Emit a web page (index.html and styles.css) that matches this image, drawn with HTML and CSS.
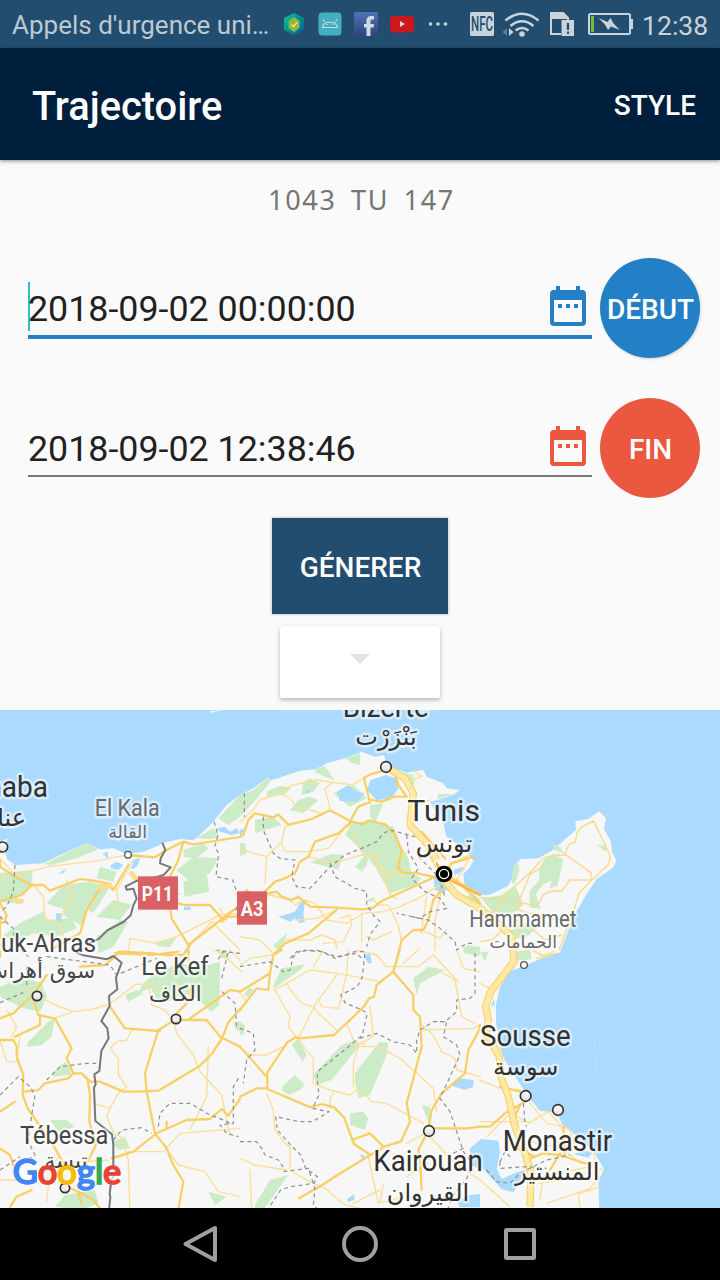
FILE: index.html
```html
<!DOCTYPE html>
<html lang="fr">
<head>
<meta charset="utf-8">
<title>Trajectoire</title>
<link rel="stylesheet" href="styles.css">
</head>
<body>
<div class="screen">
  <header class="status">
    <span class="carrier">Appels d'urgence uni…</span>
    <svg class="status-icons" viewBox="280 0 360 48" width="360" height="48">
      <defs>
        <linearGradient id="hex" x1="0" y1="0" x2="1" y2="1"><stop offset="0" stop-color="#16c48d"/><stop offset=".5" stop-color="#088e8d"/><stop offset="1" stop-color="#075a94"/></linearGradient>
        <linearGradient id="fb" x1="0" y1="0" x2="0" y2="1"><stop offset="0" stop-color="#5272b5"/><stop offset="1" stop-color="#2d4681"/></linearGradient>
      </defs>
      <path fill="url(#hex)" d="M294 13l10 5v12l-10 5-10-5V18z"/>
      <path fill="#9fb52d" stroke="#5dcc76" d="M294 17.500l5 3.500v7l-5 3.500-5-3.500v-7z"/>
      <path fill="none" stroke="#dce9bd" stroke-width="1.300" d="M291.500 24.500l2 2 3.500-4"/>
      <rect x="318.500" y="12.500" width="23" height="23" rx="4" fill="#43aebf"/>
      <path fill="none" stroke="#c5dde5" stroke-width="1.100" d="M322.500 27.500c1-7 14-7 15 0zM324.500 22l-1.500-2.500M335.500 22l1.500-2.500"/>
      <circle cx="327" cy="24.500" r=".8" fill="#c5dde5"/><circle cx="333" cy="24.500" r=".8" fill="#c5dde5"/>
      <rect x="354" y="12" width="24" height="23.500" rx="2" fill="url(#fb)"/>
      <path fill="#d0dae3" d="M366.500 36v-8.500H364V24h2.500v-3c0-3.500 2-5 5-5h2.500v3.500h-2c-1.300 0-1.500.700-1.500 1.800V24h3.500l-.5 3.500h-3V36z"/>
      <rect x="390" y="16" width="24" height="16.500" rx="4" fill="#cc171e"/>
      <path fill="#d5dce2" d="M400 21l5 3-5 3z"/>
      <g fill="#c8d3dc"><circle cx="430.500" cy="24" r="1.800"/><circle cx="438" cy="24" r="1.800"/><circle cx="445.500" cy="24" r="1.800"/>
        <rect x="470" y="12" width="24" height="24" rx="1.500"/></g>
      <text class="nfc" x="471" y="31" textLength="22" lengthAdjust="spacingAndGlyphs">NFC</text>
      <g fill="none" stroke="#c8d3dc" stroke-width="2.600">
        <path d="M505.500 20.500q16.500-13.500 33 0M510.500 26q11.500-9.500 23 0M515.500 30.500q6.500-5 13 0"/>
      </g>
      <circle cx="522" cy="34" r="2.800" fill="#c8d3dc"/>
      <path fill="#5a7d95" d="M507 28v8l-4.500-4z"/><path fill="#c8d3dc" d="M509 28l4.500 4-4.500 4z"/>
      <path fill="none" stroke="#c8d3dc" stroke-width="2" d="M561 34h-10V13h12l5 5v3"/>
      <path fill="#c8d3dc" d="M550 12h13l5 5v2h-18zM561.500 20H574v16h-12.500z"/>
      <path stroke="#234d6e" stroke-width="2.200" d="M568 23v7M568 31.500v2.300"/>
      <rect x="589" y="14" width="41" height="20" rx="1.500" fill="none" stroke="#c8d3dc" stroke-width="2"/>
      <path fill="#c8d3dc" d="M631 19h2v10h-2zM598.500 18l9 4 3-4 3 5.500 6.500 6.500-9-3.500-3 3.500-3-5.500z"/>
      <rect x="591" y="16" width="3" height="16" fill="#73bd37"/>
    </svg>
    <span class="clock">12:38</span>
  </header>

  <nav class="appbar">
    <h1 class="title">Trajectoire</h1>
    <span class="action">STYLE</span>
  </nav>

  <main class="content">
    <p class="plate"><span>1043</span><span>TU</span><span>147</span></p>
    <div class="row">
      <div class="field focused">
        <span class="value">2018-09-02 00:00:00</span>
        <svg class="calendar" viewBox="0 0 36 40" width="36" height="40"><path fill="currentColor" fill-rule="evenodd" d="M4 4h2V0h4v4h16V0h4v4h2a4 4 0 0 1 4 4v28a4 4 0 0 1-4 4H4a4 4 0 0 1-4-4V8a4 4 0 0 1 4-4zM4 14v22h28V14zM8 18h4v4H8zM16 18h4v4h-4zM24 18h4v4h-4z"/></svg>
      </div>
      <button class="round start">DÉBUT</button>
    </div>
    <div class="row">
      <div class="field end-field">
        <span class="value">2018-09-02 12:38:46</span>
        <svg class="calendar" viewBox="0 0 36 40" width="36" height="40"><path fill="currentColor" fill-rule="evenodd" d="M4 4h2V0h4v4h16V0h4v4h2a4 4 0 0 1 4 4v28a4 4 0 0 1-4 4H4a4 4 0 0 1-4-4V8a4 4 0 0 1 4-4zM4 14v22h28V14zM8 18h4v4H8zM16 18h4v4h-4zM24 18h4v4h-4z"/></svg>
      </div>
      <button class="round end">FIN</button>
    </div>
    <button class="generate">GÉNERER</button>
    <div class="dropdown"><svg viewBox="0 0 20 10" width="20" height="10"><path fill="#e4e4e3" d="M0 0h20L10 10z"/></svg></div>
  </main>

  <svg class="map" viewBox="0 30 2160 1494" width="720" height="498">
    <defs>
      <linearGradient id="dot" x1="0" y1="0" x2="0" y2="1"><stop offset="0" stop-color="#fff"/><stop offset="1" stop-color="#ddd"/></linearGradient>
    </defs>
    <rect y="30" width="2160" height="1494" fill="#abdaff"/>
    <path class="land" d="M0 425l25-10-15 25 12 38 23 17 85-5 50-25 80-35 40 18 40-3 40 17 50-7 45-18 15-9 50-11 40 3 20-15 40-40 40-50 40-30 40-20 45-33 5 10 90-30 50-4 30-18 55-15 50-20 40 15 27-5 6 20 22 20 40 13 50-8 10 20 50 20 10 15 40 5-20 15-50 15-20 5 20 35 20 30 10 40 30 22 30 20 20 30-10 20-20 20 5 40 25 20 20 3 30-1 55-27 13-25 2-30 22-25 53-2 40-23 73-62-2-26 39-7 32-23 21 20-6 33 20 35 4 35 14 25-12 22-48 33-30 45-35 60-20 50-25 65-60 20-45 20-45 17-30 48-12 50v60l12 70 15 40 45 70 30 45 30 35 35 5 20 5 10 30 45 35 50 45 32 55-17 35 3 95H0zM630 34l30-4h5l-33 9z"/>

    <!-- forests -->
    <g class="green">
      <path d="M130 493l130-63 35 18-60 25-80 22zM0 520l98-10-3 40-55 60-40-5zM300 500l50 15-10 30-50-10zM190 555l80-10 60 15-50 80-30-20-35 15-75-25zM205 575l55 55-10 50-60-35zM60 670l70-35 15 25 70-5 15 30-60 25-70-10-50 25-40-20zM340 600l55 15-35 45-70-10zM290 710l70-50 25 5-45 75-45 20zM550 450l60-20 15 15-35 30-40-5zM530 510l50-40 75 5-25 45-60 25zM550 545l70-25 8 55-75 15zM655 355l65-70v65l-35 25zM590 415l50-30 20 25-30 8zM470 725l60-13-20 30-40-5z"/>
      <g transform="translate(720)">
        <path d="M0 285l40-15 45-38 5 15-40 50-50 53zM80 275l40-18 35 8-25 20-50 5zM230 200l25 0 30 42-60-25zM315 175l45-15v35l-25-7zM190 245l20-10 30 15-20 25-35 10zM150 330l25-30 35-10 25 10-45 40zM45 360l55-10 25 25-80 25zM280 280l60-25 40 40-50 25zM335 370l60-10 65 20 20 50 25 45 10 45 30 15-20 20-75 25-45-80-50-60-40-35zM345 500l45-50-10 45-15 20zM210 487l65-25 35 2-15 45-40-10zM475 215l45 10 5 30-25-10zM595 282l50 0-55 15zM100 735l40-35-5 25-25 25zM390 315l40-5-25 60-15-20zM380 600l20-10 5 10-15 5zM0 430l15 0 5 30-20 8z"/>
        <path d="M680 590l20-10 20 20v20l-35-15zM670 740l50 0v25l-50-5z"/>
      </g>
      <g transform="translate(1440)">
        <path d="M220 432l15 5 22 25-35-12zM348 432l32 8-2 15zM195 475l25-12 30 15-18 80-25 8 10-25-25 10-25 30 15 45-33-3v-50l30-35-3-28zM100 495l15-5 3 20-15 45-8-10zM5 595l60-10 40-30 25 60-30 25-60 0zM90 690l50-20 30 15-35 30-30 0zM110 755l40-7 5 30-50 5zM0 755l25 0-10 30z"/>
      </g>
      <g transform="translate(0 750)">
        <path d="M0 110l70-30 55 20 15 40-20 45-50-10-70-35zM85 275l60-60 20-10-10 55-30 25-45 5zM160 365l35-30 20 20-5 20-50 5zM375 135l35-15 20 10-45 25zM430 100l40-35 70-25 50 15 70-20-2 130-25 20-60-60-40 25-60 5-20-40-40 15zM150 510l50 0 25 20-50 15zM110 665l60-15 40 30-50 25zM165 770l30-35 90-15 10 40-50 20zM335 575l40-15 15 35-35 5zM625 725l55 15-35 25zM660 0l25 10v20l-25-10zM700 215l20 0v30l-15-10z"/>
      </g>
      <g transform="translate(720 750)">
        <path d="M100 105l25-50 70-12-15 18-80 55zM10 135l20-25 10 10-15 20zM155 285l20-20 25 50-12 20zM130 405l35-30 30 30-15 15-35 15-20-15zM220 375l85-90 45-15 10 15-85 105-45 15zM345 370l50-65 25-30 25 5-5 35-50 120-35 10-10-50zM520 85l45-35 50 10-75 40-10 35zM330 490l40-5 15 20-10 35-45-15zM545 465l25 5-2 55zM45 765l45-75 55-15-75 105-25 0zM0 215l15 10-5 30-10 0zM680-15l30 5 5 30-35-10z"/>
      </g>
    </g>

    <!-- lakes -->
    <g class="lake">
      <path d="M308 460l15-5 3 25zM332 495l18-10 20 10-15 15-22-5zM393 505l10-25 18-8-8 25-15 10zM175 522l25-18-10 15zM168 640l20 0-5 25-15-5zM552 620l20 0v10h-20zM650 385l25-5 15 15 20-10 10 15-25 5-35-10z"/>
      <path d="M720 390l12-5-6 18-6 5zM1010 275l35-20 25 20 25 5-25 25-50-2zM1112 240l45-15 30 10 8 30-20 30-45 5-30-30zM835 650l50-15 20-35 10 5-5 40 5 20-15 5-15-15-15 10zM915 275l20-8-13 15zM1300 535l30-10 20 30-20 25-25-10zM1360 510l30-10 5 10-30 15z"/>
      <path d="M1090 765l20-3 6 25-10 5zM1480 895l5 20-10 5zM1350 1155l30-20 40 5v20l-25 10zM1410 1345l30-25v90l-30-20zM1440 1317l55 5 5 35-10 50 15 30 45-20 20-5-10 35-20 30-35-10-60-65-5-25zM1370 1505l40-20 30-3v40h-60zM1043 1495l20-12v18l-20 5zM1080 1362l15 5-8 10zM1720 1362l30-10 30 3-15 18z"/>
    </g>

    <!-- secondary roads -->
    <g class="minor">
      <path d="M5 480l40 45 100-25 150-18 75-15M95 550l35 40 5 65 45 15 10 35-10 40M0 520l30 30M320 545l30 25 5 45-15 20M180 655l35-70-15-45M350 570l50-90M385 755l5-40 80 15 60-20 130-65M435 552l30 20 75 10M660 645l60-5M565 740l70-75 60 60 25 25M670 645l-10-20"/>
      <g transform="translate(720)">
        <path d="M0 365l35-30 25-35 60-20 5-10 35-15 70-15 105 15 35-20M120 280l30 15 20 25 40 10 40 12M270 325l-15-60 20-15M165 370l-30 10-10 45-45 45-55-15-25-10M80 470l-5 80M125 430l10 25 70 0 60-10 60-75 30 70 20 30 65-10M210 470l65 20 90-25 30 5 30 25 15 30 55-20M500 530l-75-10-30-55M430 525l20 60 20 10M500 460l-35 20M60 600l30-15 60 15 15 15 30-15 30 10 35 50 60 10 50-30 60-5 50-15 65-30 95-60M290 630l-60 25-65 5M365 640l0 85M300 655l30-10 5 30-25 50-60 5M0 710l60 10 40 40M140 720l70 0 35-15 40 15 5 25M380 710l20 10 55-25M395 595l20 20 30 0 30 60 10 50M560 590l-10 60-5 50M605 570l-20 90 0 90M620 690l-20 25-45-20M480 225l20 20 45-15-20-15M570 300l-45 20M580 345l30 10M560 455l30 50M630 490l60-25M645 550l40-70"/>
      </g>
      <g transform="translate(1440)">
        <path class="mid" d="M0 593l60 5 55 10 50 7 12-5 13-27 25-10 30 0 25-33h65l-2-22-75-53-35 0-35 10-30 35-55 50-38 37M115 610v20l35 10 130 30M256 462l10-28 20-8 5-28 15-18 35-17 50 105-5 25-53 50-35 35-20 65-40 105M115 608l35-85 40-25M60 600v30l-60 15M160 690l35 30 50-15M90 650l25 15 5 40 20 55M0 725l35-5 40-35M160 750l30 20 30-15M170 775l60-15"/>
      </g>
      <g transform="translate(0 750)">
        <path d="M75 115l90 50 55 20 60-8 50-15 80-60 45 5 45 20M160 205l60-20M280 460l50 15M395 240l-15 30-30 5-20 20 25 30v50l25 35-25 20-25 45-10 25 10 25 15 30 20 5 20 70 5 160 10 5M445 95l10 70 40 15 25 30 10 40 50 65 20 50 65 70 15 80 10 40M625 290l-5 150-50 100M495 600l45-50 180-15M385 605l110 0M510 610l25 35 80 20 40 60 65 15M0 270l20 65h30l10-80M20 180l30 50-15 30M0 690l140 0M120 675l60-55M180 640l145-10M150 665l-10 90M640 0l25 10 60 55M690 0l30 30"/>
      </g>
      <g transform="translate(720 750)">
        <path d="M0 45l30-20 65-10M0 130l20 25M100 120l40-20 70-40 80 10 135 25M250 0l-30 50M325 0l-5 70-20 90-5 15-50-5-10-25-60 120M140 100l20 30 25 30 35 10 15 20 55 50M105 120l45 80-5 30 20 25 30 40 25 30v75l50 20 60 15 20-15 20 5 25 30 45 5 110 60M320 220l20 50 15 20 60 0 65 35 100 90 10 70M290 75l-50 70M355 290l-15 50 0 70M390 170l10 90-55 30M270 475v-30l10-15M375 290l-10-15M20 315h60l60-30M650 0l20 55 50 10M585 55l60 35 20 110 40 20M540 220l40 35 25 50 40 20 5 35 70 20M550 240l150-5 20-10M350 0l60 15 30 35h95l45-35 75 80M490 40l50-45M80 430l20 50 5 60 30 40 15 10v70l40 25 65 30 60 50 45 10M0 625l45 20 95 15M30 660l5 120M385 620l30 140 80-20M420 755l10-50M340 760l80-40M570 560l75 80 75 50M500 580l65-35M500 680l65-40"/>
      </g>
      <g transform="translate(1440 750)">
        <path d="M0 100l30 15M0 390l60 25 60 5M0 515h155l50-30 45 50M150 460l50 60 50 10 20 10M150 575l100 20 50 45M20 560l70-70 60 30M200 560l60 30M270 545l20 60M180 750l10-70 140-30 40 10M0 690l90 80M175 700l75-10 80-20M300 730l60-20M200 760l60-20 70-25 30-35M295 730l5 40M160 5l50 15M340 605l15 80"/>
      </g>
    </g>

    <!-- main roads -->
    <g class="major">
      <path d="M0 480v20l45 30 50 25 35 0 20 17 90-35 40 5 40 8 20 20 45-75M385 465l80 7 40-25 45-22 30 8 140-22M550 425l-15 55-25 50M300 565l-40 65-20 70-80 45M535 610l20 5h75l40 45M510 530l-5 60 10 65 50 80 155-120M0 605l65-20 30-30M0 610l20 35-5 20-15 5M0 650v120M565 740v40M720 650h-35l-20 15M570 735l-20 30-60 0-30-5-100-5-15 5"/>
      <g transform="translate(720)">
        <path d="M0 410l10-5 15-45 20-20 55 12 15-8 30 30 65-15 60-28 60 32 40 10 15-12 50 12 30 30 20 50-12 50 15 15 45 2 90 20M330 365l25-45 25-10 10-2-15-60-3-15 20-10 45-13M335 365l-40 35-70 25-20 45-25 15-15 35-30 15-30 10-30 30M0 590l20-20 20 20 70-15 15 15 30 10 20-10 35 30 80 3 80 5 30-5 25-20 45-20 100-45 30-20M460 205l15 50 25 35h-35l-40 15-30-5M545 395l70 80M590 450l-30-20M290 630l-85 70-70 30-30 30M470 780l15-60 35-30h30l15-30 15-60 25-30M620 510l15-20 65-20M610 530l15 40M650 540l70 70M610 520l110 65"/>
        <path class="orange" d="M610 530l-20-40 20 40 110 55"/>
      </g>
      <g transform="translate(0 750)">
        <path d="M0 205l40-15 25-25 30-25 25-35 20-30M100 150l15 45 45 10M45 260l75-35 0-30M0 270h40l10 20 0 30 20 55-2 60 15 40 70 100 35 60-5 30M45 455l-45 30M75 425l40-5 20-20 70-15 15-15 25 0 25 25 30 0 70 30h50l55-3 50-30 75-45 35-35 30-45 20-50 40-45M165 205l50 90-15 30 20 45M262 385l8 50-2 80 20 70-30 60M330 170l45 65 105 8M525 210l-50 30-40 130 5 55 25 125 35 45 20 50 30 50-20 110M530 210h90l40 50 60 30M570 205l100-70 20-15 30 5M530 190l40-40 0-30M240 50l75-5 40-35M355 10l100 5 80-10M335 625l65-20 70-55 90-40 70-3 35-30 20 20 35-50M500 535v-20M0 595l30 20 10 30M200 710l45 20 35 20 20 25M30 770l20-30 45-20M235 730l10 30"/>
      </g>
      <g transform="translate(720 750)">
        <path d="M125 0l-25 15-10 55-90 55M90 70l-5 50-35-5-50 65M480-5l-20 70 60 70v45l20 20 5 90-25 95-20 75 10 55-28 60-50 15-50 30-105 65-30 20-70 40M460 65l-50 40-8 35-15 5-15 25-90 85-100 10-15-3-25 15-60 90v50l130 55 35-10 35 10 30 30 30 80 45 30M0 290l80 90M0 440l50-25 30 0M335 570l55-20 40 40M720 225l-5 20-30 55-10 70-70 60-30 50-10 60M570 535h110l40-5M565 540l-30 60 5 20 5 100"/>
      </g>
      <g transform="translate(1440 750)"><path d="M0 530h30l45-40 60-35M95 520l25-55M60 410l60 15 20 25M140 630l50-20 50 5 90 30M240 610l-30 50M250 530l5 90M100 590l65 30"/></g>
    </g>
    <path class="mergelink" d="M300 562l30-7M395 520l12 16M50 604h14"/>

    <!-- motorways -->
    <path class="motor-edge" d="M1165 205l50 30 25 45-10 95 55 60 25 45M1320 525l50 60 70 40 65 55 30 30 7 75-70 90-15 45 8 40-7 40 40 70 5 60 22 60 20 90 30 80 18 60-3 100"/>
    <path class="motor" d="M1165 205l50 30 25 45-10 95 55 60 25 45M1320 525l50 60 70 40 65 55 30 30 7 75-70 90-15 45 8 40-7 40 40 70 5 60 22 60 20 90 30 80 18 60-3 100"/>

    <!-- administrative boundaries -->
    <g class="dashed">
      <path d="M642 365l12 40-10 35 12 20-8 70 50 10 20 60-10 30 12 50M45 495l-5 80-20 45-20 15M0 650l45 40-10 30 50 50M720 760l-50-5-20 30"/>
      <path d="M733 280v70M790 350l0 40 30 70 20 15 45 5-10 50 15 30 40 5 60-65 45-35 50-20 45-20 20-25 20-10 75 20M990 490l15 40 60 35 35 10v40l20 30 20 20-30 40-10 35M1220 405l5 50 30 50-20 30 40 40 45 20 20 30-50 10-30 20-70-15M1255 470l60 60 20 60M1235 650l50 10 35 25 45 40 5 25 30-20 20 0M870 775l20-20 60-5 60 20 60-10 15 15"/>
      <path d="M0 908l70-30M140 770l190 25 20 30 60-25 60-25M665 835l20-80-35-5M665 875l40 35 5 70M140 1140l40-40 80-10 30 0M0 1185l55-55 35 30 15 25-10 60-10 80 20 40-30 20M0 1410l60-40M340 1320l25-30 60-7 30 17M475 1280l5-40 30-30 60 0 50 30 50 20 20 10M715 1135l-15 25 0 110-40 5 20 25 35 10M80 855l0-60"/>
      <g transform="translate(720 750)"><path d="M0 50l90-15 40 30 20-5 10-40 25-20 60 5 40 20 60-20 30 0-8 75-15 30-50 25 15 25 50 20 15 10-15 65-35 30-100 80 0 30 5 40-20 40 50 10-50 30-40 0-70-15 5 40 40 45 30 30 15 40 35 25-10 20-70 10-30 10-60 90M0 235l40 15 5 50-25 30-10 70M360 265l50-15 50 25 50 10 20 25 0-40 10-30 40-25h40l-10 45 40 25 10 30-60 130 30 40 40 120 30 40-20 40-40 50-20 50M580 215h35l35-30 0-35 40-5 15-15V0M0 575h50l15 20 10 20 40 15 20 30M130 665l75-10 20 60-5 50 20 20M640 610l40-20"/></g>
      <path d="M1570 1210l5 60 5 10M1500 1385l15-30 20 20M1500 1385l0 20 80-5 60 5M1460 1410l30 35 40 5 30-30 80-40 70-15"/>
    </g>

    <!-- national border -->
    <path class="border" d="M488 430l8 20-14 25-2 15 32 12-20 22-25 8-55 10-35 17 3 10 20-3 10 30-10 20-8 30-22 20-48 25-25 25-30 15M230 758l20 8 70 12 20-10 25 20-17 45 4 35-25 20 2 30-25 45 18 22 4 30-22 38-6 60-15 10 4 30-5 10 4 100 50 40 4 30v70l6 14-12 24-5 40 2 10-6 60"/>

    <!-- town markers -->
    <g class="town"><circle cx="8" cy="441" r="15"/><circle cx="1158" cy="201" r="16"/><circle cx="111" cy="888" r="14"/><circle cx="528" cy="957" r="14"/><circle cx="195" cy="1464" r="14"/><circle cx="1287" cy="1293" r="16"/><circle cx="1577" cy="1188" r="16"/><circle cx="1674" cy="1230" r="16"/></g>
    <g class="small-town"><circle cx="384" cy="464" r="10"/><circle cx="1572" cy="795" r="10"/></g>
    <circle cx="1332" cy="522" r="25"/><circle cx="1332" cy="522" r="14" fill="none" stroke="#fff" stroke-width="4"/>

    <rect x="414" y="529" width="120" height="100" fill="#d96163"/><rect x="711" y="574" width="90" height="100" fill="#d96163"/>
    <text class="shield" x="425" y="603" textLength="94" lengthAdjust="spacingAndGlyphs">P11</text><text class="shield" x="722" y="648" textLength="68" lengthAdjust="spacingAndGlyphs">A3</text>

    <!-- place names -->
    <g class="city">
      <text x="1028" y="51" textLength="258" lengthAdjust="spacingAndGlyphs">Bizerte</text><text class="ar" x="1158" y="136">بَنْزَرْت</text>
      <text x="-142" y="291" textLength="286" lengthAdjust="spacingAndGlyphs">Annaba</text><text class="ar from-right" x="78" y="378">عنابة</text>
      <text x="1222" y="363" textLength="218" lengthAdjust="spacingAndGlyphs">Tunis</text><text class="ar" x="1332" y="456">تونس</text>
      <text x="1440" y="1038" textLength="272" lengthAdjust="spacingAndGlyphs">Sousse</text><text class="ar" x="1577" y="1126">سوسة</text>
      <text x="1508" y="1352" textLength="328" lengthAdjust="spacingAndGlyphs">Monastir</text><text class="ar" x="1672" y="1439">المنستير</text>
      <text x="1120" y="1414" textLength="328" lengthAdjust="spacingAndGlyphs">Kairouan</text><text class="ar" x="1284" y="1503">القيروان</text>
    </g>
    <g class="city mid-city">
      <text x="-82" y="755" textLength="370" lengthAdjust="spacingAndGlyphs">Souk-Ahras</text><text class="ar" x="116" y="834">سوق أهراس</text>
      <text x="424" y="825" textLength="202" lengthAdjust="spacingAndGlyphs">Le Kef</text><text class="ar" x="526" y="902">الكاف</text>
      <text x="60" y="1331" textLength="265" lengthAdjust="spacingAndGlyphs">Tébessa</text><text class="ar" x="198" y="1405">تبسة</text>
    </g>
    <g class="city small-city">
      <text x="284" y="348" textLength="195" lengthAdjust="spacingAndGlyphs">El Kala</text><text class="ar" x="383" y="415">القالة</text>
      <text x="1408" y="681" textLength="321" lengthAdjust="spacingAndGlyphs">Hammamet</text><text class="ar" x="1570" y="745">الحمامات</text>
    </g>
    <path d="M1783 1020q3 80 12 135" fill="none" stroke="#cae7ff" stroke-width="3" stroke-dasharray="4 5"/>
    <g class="google-halo"><circle cx="84" cy="1415" r="42"/><circle cx="152" cy="1428" r="29"/><circle cx="210" cy="1428" r="29"/><circle cx="266" cy="1428" r="29"/><circle cx="338" cy="1428" r="27"/></g>
    <text class="google" x="38" y="1451" textLength="326" lengthAdjust="spacingAndGlyphs"><tspan class="g-blue">G</tspan><tspan class="g-red">o</tspan><tspan class="g-yellow">o</tspan><tspan class="g-blue">g</tspan><tspan class="g-green">l</tspan><tspan class="g-red">e</tspan></text>
  </svg>

  <footer class="navbar">
    <svg viewBox="0 0 36 40" width="36" height="40"><path d="M33 4v32L3.500 20z"/></svg>
    <svg viewBox="0 0 36 40" width="36" height="40"><circle cx="18" cy="20" r="16"/></svg>
    <svg viewBox="0 0 36 40" width="36" height="40"><rect x="4" y="6" width="28" height="28" rx=".5"/></svg>
  </footer>
</div>
</body>
</html>
```
FILE: styles.css
```css
* { box-sizing: border-box; }
body { margin: 0; font-family: Roboto, "Noto Sans", sans-serif; }
button { border: 0; padding: 0; font: 500 28px/1 Roboto, sans-serif; color: #fff; }
.screen { width: 720px; height: 1280px; display: flex; flex-direction: column; overflow: hidden; background: #fafafa; }
.status { height: 48px; flex: none; display: flex; align-items: center; padding-left: 12px; background: #234d6e; color: #bcc9d3; font-size: 27px; white-space: nowrap; }
.carrier { width: 268px; padding-top: 2px; font-size: 26px; }
.status-icons { flex: none; }
.clock { margin-left: 2px; padding-top: 2px; font-size: 26.6px; color: #c8d3dc; }
.nfc { font: 500 20px Roboto, sans-serif; fill: #234d6e; }
.appbar { height: 112px; flex: none; display: flex; align-items: center; justify-content: space-between; padding: 2px 24px 0 32px; background: #001f3d; color: #fff; box-shadow: 0 1px 4px rgba(0,0,0,.45); z-index: 1; }
.title { margin: 0; padding-top: 4px; font-size: 39.8px; font-weight: 500; line-height: 48px; }
.action { font-size: 28px; font-weight: 500; }
.content { height: 550px; flex: none; display: flex; flex-direction: column; align-items: center; padding-top: 20px; }
.plate { margin: 0; height: 58px; flex: none; width: 187px; margin-left: 3px; display: flex; justify-content: space-between; font: 27px/40px "Noto Sans", sans-serif; letter-spacing: 1.7px; color: #757575; }
.row { width: 100%; height: 100px; flex: none; margin: 20px 0 20px; padding: 0 20px 0 28px; display: flex; justify-content: space-between; align-items: flex-start; }
.field { width: 564px; height: 79px; border-bottom: 2px solid #777; display: flex; align-items: flex-start; justify-content: space-between; padding: 24px 6px 0 0; color: #e9583f; }
.focused { height: 81px; border-bottom: 4px solid #237fc6; color: #237fc6; }
.value { height: 49px; font-size: 35.8px; line-height: 54px; color: #212121; white-space: nowrap; }
.focused .value { box-shadow: inset 2px 0 #2bbdcc; }
.calendar { margin-top: 4px; }
.round { width: 100px; height: 100px; border-radius: 50%; padding: 3px 0 0 1px; }
.start { background: #237fc6; box-shadow: 1px 1px 3px rgba(0,0,0,.16); }
.end { background: #e9583f; }
.generate { width: 176px; height: 96px; flex: none; padding: 4px 0 0 1px; background: #234d6e; box-shadow: 0 0 3px rgba(0,0,0,.3); }
.dropdown { width: 160px; height: 72px; flex: none; margin-top: 12px; display: flex; justify-content: center; padding-top: 28px; border-radius: 4px 4px 2px 2px; background: #fff; box-shadow: 0 2px 4px rgba(0,0,0,.28); }
.row + .row { margin-top: 20px; }
.map { flex: none; display: block; }
.land { fill: #f7f7f7; }
.green { fill: #ccecc8; }
.lake { fill: #abdaff; }
.minor, .major, .dashed, .border { fill: none; stroke-linejoin: round; stroke-linecap: round; }
.minor { stroke: #fbdf98; stroke-width: 4.2; }
.mid { stroke: #fbd98a; }
.major { stroke: #f7cf65; stroke-width: 6.8; }
.orange { stroke: #f9b93f; }
.mergelink { fill: none; stroke: #fbdc8c; stroke-width: 15; stroke-linecap: round; }
.motor-edge, .motor { fill: none; stroke-linejoin: round; }
.motor-edge { stroke: #f7cf65; stroke-width: 22; }
.motor { stroke: #ffe9a5; stroke-width: 16; }
.dashed { stroke: #909094; stroke-width: 3.6; stroke-dasharray: 12 10; stroke-linecap: butt; }
.border { stroke: #777; stroke-width: 6; }
.town circle { fill: url(#dot); stroke: #333; stroke-width: 5; }
.small-town circle { fill: #fff; stroke: #555; stroke-width: 4; }
.shield { font: 700 58px Roboto, sans-serif; fill: #fff; }
.city { font: 90px Roboto, "DejaVu Sans", sans-serif; fill: #303030; stroke: rgba(255,255,255,.5); stroke-width: 15; stroke-linejoin: round; paint-order: stroke; }
.ar { font: 72px "DejaVu Sans", sans-serif; text-anchor: middle; direction: rtl; }
.from-right { text-anchor: start; }
.mid-city { font-size: 79px; fill: #454545; }
.mid-city .ar { font-size: 64px; }
.small-city { font-size: 72px; fill: #68696d; }
.small-city .ar { font-size: 52px; }
.google-halo { fill: rgba(255,255,255,.7); }
.google { font: 500 104px Lato, sans-serif; stroke-width: 5; }
.g-blue { fill: #4285f4; stroke: #4285f4; }
.g-red { fill: #ea4335; stroke: #ea4335; }
.g-yellow { fill: #fbbc05; stroke: #fbbc05; }
.g-green { fill: #34a853; stroke: #34a853; }
.navbar { height: 72px; flex: none; display: flex; justify-content: center; align-items: center; gap: 124px; background: #000; }
.navbar svg { fill: none; stroke: #a0a0a0; stroke-width: 4; stroke-linejoin: round; }
```
